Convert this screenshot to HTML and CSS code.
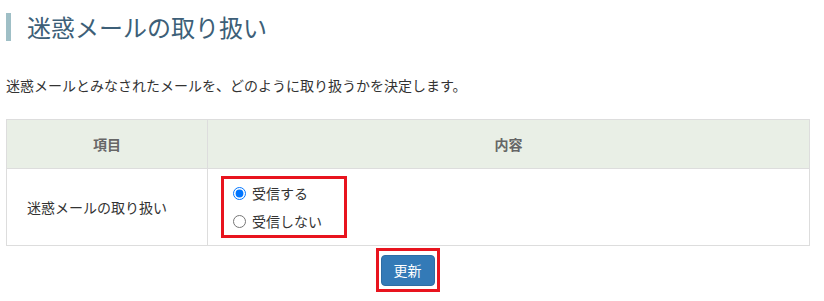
FILE: index.html
```html
<!DOCTYPE html>
<html lang="ja">
<head>
<meta charset="utf-8">
<title>迷惑メールの取り扱い</title>
<link rel="stylesheet" href="styles.css">
</head>
<body>
<h1 class="page-title">迷惑メールの取り扱い</h1>
<p class="desc">迷惑メールとみなされたメールを、どのように取り扱うかを決定します。</p>
<table class="settings">
  <thead>
    <tr>
      <th class="col-item">項目</th>
      <th>内容</th>
    </tr>
  </thead>
  <tbody>
    <tr>
      <td class="item-name">迷惑メールの取り扱い</td>
      <td class="item-value">
        <div class="highlight radios">
          <label class="radio"><input type="radio" name="spam" checked><span>受信する</span></label>
          <label class="radio"><input type="radio" name="spam"><span>受信しない</span></label>
        </div>
      </td>
    </tr>
  </tbody>
</table>
<div class="actions">
  <div class="highlight btn-wrap">
    <button class="btn" type="button">更新</button>
  </div>
</div>
</body>
</html>
```
FILE: styles.css
```css
html, body {
  margin: 0;
  padding: 0;
  background: #fff;
}
body {
  padding: 0 15px 0 6px;
  font-family: "Noto Sans CJK JP", "Noto Sans", sans-serif;
  color: #333;
  font-size: 14px;
}
.page-title {
  margin: 13px 0 0;
  border-left: 5px solid #9fbfc6;
  padding-left: 16px;
  font-size: 24px;
  line-height: 28px;
  font-weight: normal;
  color: #3d5f78;
}
.desc {
  margin: 34px 0 0;
  font-size: 14px;
  line-height: 20px;
  color: #333;
}
.settings {
  margin-top: 24px;
  width: 804px;
  border-collapse: collapse;
}
.settings th,
.settings td {
  border: 1px solid #ddd;
}
.settings th {
  background: #e9efe6;
  height: 48px;
  padding: 0;
  font-weight: bold;
  color: #666;
  font-size: 14px;
  text-align: center;
}
.col-item {
  width: 200px;
}
.item-name {
  padding: 0 0 0 20px;
  text-align: left;
  font-size: 14px;
  color: #333;
}
.item-value {
  height: 76px;
  padding: 0 0 0 13px;
  vertical-align: middle;
}
.highlight {
  border: 3px solid #e8141e;
}
.radios {
  width: 120px;
  display: flex;
  flex-direction: column;
}
.radio {
  display: flex;
  align-items: center;
  height: 28px;
  font-size: 14px;
  color: #333;
}
.radio input {
  margin: 0 6px 0 9px;
  width: 13px;
  height: 13px;
  accent-color: #0075ff;
}
.actions {
  display: flex;
  justify-content: center;
  margin-top: 2px;
}
.btn-wrap {
  padding: 4px 2px 3px;
  display: flex;
}
.btn {
  font-family: "Noto Sans CJK JP", "Noto Sans", sans-serif;
  font-size: 14px;
  line-height: 17px;
  padding: 6px 12px;
  color: #fff;
  background: #337ab7;
  border: 1px solid #2e6da4;
  border-radius: 4px;
}
```
